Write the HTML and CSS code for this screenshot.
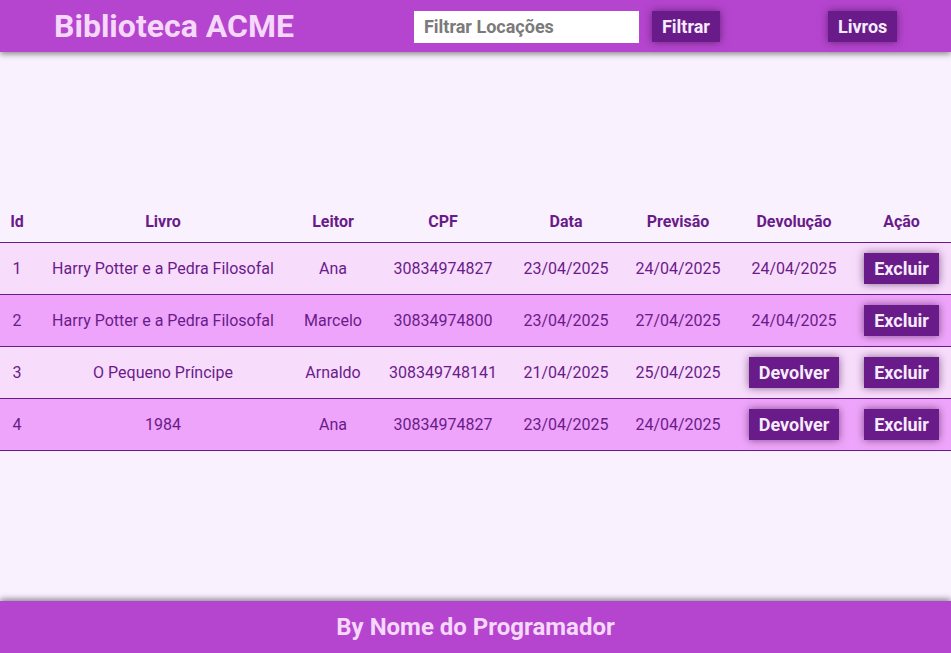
FILE: index.html
```html
<!DOCTYPE html>
<html lang="pt-BR">
<head>
<meta charset="utf-8">
<title>Biblioteca ACME</title>
<link rel="stylesheet" href="styles.css">
</head>
<body>
<div class="page">
  <header class="topbar">
    <h1 class="brand">Biblioteca ACME</h1>
    <form class="filter">
      <input class="filter-input" type="text" placeholder="Filtrar Locações">
      <button class="btn" type="button">Filtrar</button>
    </form>
    <button class="btn nav-btn" type="button">Livros</button>
  </header>
  <main class="content">
    <table class="loans">
      <colgroup>
        <col class="c-id"><col class="c-livro"><col class="c-leitor"><col class="c-cpf">
        <col class="c-data"><col class="c-prev"><col class="c-dev"><col class="c-acao">
      </colgroup>
      <thead>
        <tr><th>Id</th><th>Livro</th><th>Leitor</th><th>CPF</th><th>Data</th><th>Previsão</th><th>Devolução</th><th>Ação</th></tr>
      </thead>
      <tbody>
        <tr><td>1</td><td>Harry Potter e a Pedra Filosofal</td><td>Ana</td><td>30834974827</td><td>23/04/2025</td><td>24/04/2025</td><td>24/04/2025</td><td><button class="btn">Excluir</button></td></tr>
        <tr><td>2</td><td>Harry Potter e a Pedra Filosofal</td><td>Marcelo</td><td>30834974800</td><td>23/04/2025</td><td>27/04/2025</td><td>24/04/2025</td><td><button class="btn">Excluir</button></td></tr>
        <tr><td>3</td><td>O Pequeno Príncipe</td><td>Arnaldo</td><td>308349748141</td><td>21/04/2025</td><td>25/04/2025</td><td><button class="btn">Devolver</button></td><td><button class="btn">Excluir</button></td></tr>
        <tr><td>4</td><td>1984</td><td>Ana</td><td>30834974827</td><td>23/04/2025</td><td>24/04/2025</td><td><button class="btn">Devolver</button></td><td><button class="btn">Excluir</button></td></tr>
      </tbody>
    </table>
  </main>
  <footer class="footer">By Nome do Programador</footer>
</div>
</body>
</html>
```
FILE: styles.css
```css
* { box-sizing: border-box; }
html, body { margin: 0; padding: 0; }
body {
  font-family: Roboto, "Liberation Sans", sans-serif;
  background: #f9f1fe;
  color: #6a1b8a;
}
.page {
  min-height: 100vh;
  display: flex;
  flex-direction: column;
}
.topbar {
  height: 52px;
  background: #b545cf;
  display: flex;
  align-items: center;
  padding-left: 54px;
  box-shadow: 0 2px 6px rgba(0,0,0,0.45);
  position: relative;
  z-index: 1;
}
.brand {
  margin: 0;
  font-size: 32px;
  font-weight: 700;
  color: #f6d8fb;
}
.filter {
  display: flex;
  align-items: center;
  gap: 13px;
  margin-left: 120px;
}
.nav-btn { margin-left: 108px; }
.filter-input {
  width: 225px;
  height: 32px;
  margin-top: 1px;
  border: none;
  padding: 0 10px;
  font-family: inherit;
  font-size: 18px;
  font-weight: 700;
  color: #555;
  background: #fff;
  outline: none;
}
.filter-input::placeholder { color: #7a7a7a; }
.btn {
  font-family: inherit;
  font-size: 18px;
  font-weight: 700;
  color: #f6ecfb;
  background: #6a1b8a;
  border: none;
  height: 31px;
  padding: 0 10px;
  box-shadow: 0 0 8px rgba(40,0,50,0.55);
  cursor: pointer;
}
.content {
  flex: 1;
  padding-top: 150px;
}
.loans {
  width: 100%;
  border-collapse: collapse;
  table-layout: fixed;
}
.c-id { width: 34px; }
.c-livro { width: 258px; }
.c-leitor { width: 82px; }
.c-cpf { width: 138px; }
.c-data { width: 108px; }
.c-prev { width: 116px; }
.c-dev { width: 116px; }
.c-acao { width: 99px; }
.loans th {
  height: 40px;
  font-size: 16px;
  font-weight: 700;
  text-align: center;
  border-bottom: 1px solid #6a1b8a;
  padding: 0;
}
.loans td {
  height: 52px;
  font-size: 16px;
  text-align: center;
  border-bottom: 1px solid #6a1b8a;
  padding: 0;
}
.loans tbody tr:nth-child(odd) { background: #f8dcfc; }
.loans tbody tr:nth-child(even) { background: #eea4fa; }
.footer {
  height: 52px;
  background: #b545cf;
  color: #f6d8fb;
  font-size: 24px;
  font-weight: 700;
  display: flex;
  align-items: center;
  justify-content: center;
  box-shadow: 0 -2px 6px rgba(0,0,0,0.45);
}
```
